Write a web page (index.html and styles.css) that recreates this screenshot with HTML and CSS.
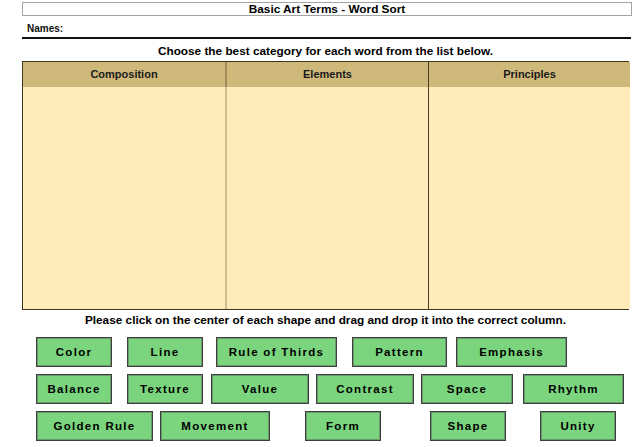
FILE: index.html
```html
<!DOCTYPE html>
<html>
<head>
<meta charset="utf-8">
<link rel="stylesheet" href="styles.css">
</head>
<body>
<div class="page">
  <div class="title">Basic Art Terms - Word Sort</div>
  <div class="names">Names:</div>
  <div class="rule"></div>
  <div class="instr">Choose the best category for each word from the list below.</div>
  <div class="sort-table">
    <div class="th">Composition</div>
    <div class="th th-mid">Elements</div>
    <div class="th th-last">Principles</div>
    <div class="td"></div>
    <div class="td td-mid"></div>
    <div class="td td-last"></div>
  </div>
  <div class="instr instr2">Please click on the center of each shape and drag and drop it into the correct column.</div>
  <div class="tray">
    <div class="tile" style="left:14px;top:0;width:76px">Color</div>
    <div class="tile" style="left:105px;top:0;width:76px">Line</div>
    <div class="tile" style="left:194px;top:0;width:121px">Rule of Thirds</div>
    <div class="tile" style="left:330px;top:0;width:95px">Pattern</div>
    <div class="tile" style="left:434px;top:0;width:111px">Emphasis</div>

    <div class="tile" style="left:14px;top:37px;width:76px">Balance</div>
    <div class="tile" style="left:105px;top:37px;width:76px">Texture</div>
    <div class="tile" style="left:189px;top:37px;width:98px">Value</div>
    <div class="tile" style="left:294px;top:37px;width:98px">Contrast</div>
    <div class="tile" style="left:399px;top:37px;width:92px">Space</div>
    <div class="tile" style="left:501px;top:37px;width:101px">Rhythm</div>

    <div class="tile" style="left:14px;top:74px;width:117px">Golden Rule</div>
    <div class="tile" style="left:138px;top:74px;width:110px">Movement</div>
    <div class="tile" style="left:283px;top:74px;width:76px">Form</div>
    <div class="tile" style="left:408px;top:74px;width:76px">Shape</div>
    <div class="tile" style="left:518px;top:74px;width:76px">Unity</div>
  </div>
</div>
</body>
</html>
```

FILE: styles.css
```css
html, body {
  margin: 0;
  padding: 0;
  background: #ffffff;
}
body {
  font-family: "Liberation Sans", Arial, sans-serif;
  color: #000;
  width: 640px;
  height: 447px;
  overflow: hidden;
}
.page {
  padding: 2px 0 0 22px;
  width: 610px;
}
.title {
  border: 1px solid #a3a3a3;
  height: 12px;
  line-height: 12px;
  font-size: 11.8px;
  font-weight: bold;
  text-align: center;
  width: 608px;
}
.names {
  margin-top: 6px;
  padding-left: 5px;
  font-size: 10px;
  font-weight: bold;
  height: 15px;
  line-height: 14px;
  color: #111;
}
.rule {
  height: 2px;
  background: #111;
  width: 609px;
}
.instr {
  text-align: center;
  font-size: 11.8px;
  font-weight: bold;
  line-height: 13px;
  padding-top: 6px;
  height: 16px;
  width: 607px;
}
.sort-table {
  display: grid;
  grid-template-columns: 202px 203px 202px;
  grid-template-rows: 25px 222px;
  width: 607px;
  box-sizing: border-box;
  border: 1.5px solid #3f3720;
  background: #fdecb9;
}
.th {
  background: #cfb97a;
  font-size: 11px;
  font-weight: bold;
  text-align: center;
  line-height: 24px;
  color: #1a1a1a;
}
.th-mid {
  border-left: 2px solid #a48c58;
}
.th-last, .td-last {
  border-left: 1.5px solid #4a3e22;
}
.td {
  background: #fdecb9;
}
.td-mid {
  border-left: 2px solid #cdbd93;
}
.instr2 {
  padding-top: 4px;
  height: 23px;
}
.tray {
  position: relative;
  width: 610px;
  height: 110px;
}
.tile {
  position: absolute;
  height: 30px;
  box-sizing: border-box;
  background: #7bd47e;
  border: 1px solid #3e3e3e;
  box-shadow: inset 0 0 0 1px #6a9a6a;
  font-size: 11.5px;
  font-weight: bold;
  letter-spacing: 1.3px;
  text-align: center;
  line-height: 28px;
  color: #000;
}
```
